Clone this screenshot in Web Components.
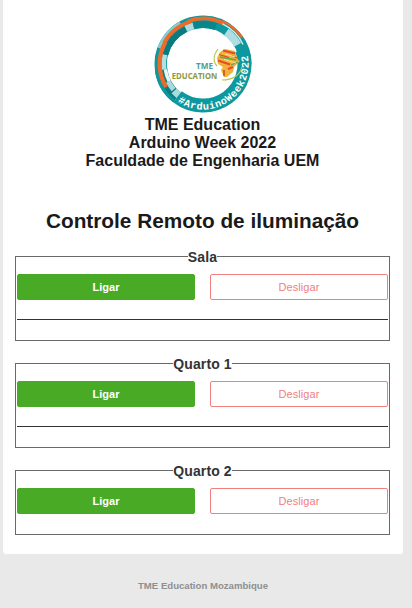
<!DOCTYPE html>
<html lang="pt">
<head>
<meta charset="utf-8">
<title>Controle Remoto</title>
<style>
html,body{margin:0;height:608px;overflow:hidden;background:#e9e9e9}
body{font-family:"Liberation Sans",Arial,sans-serif}
</style>
</head>
<body>
<remote-page>
  <week-logo slot="logo"></week-logo>
  <room-control name="Sala" divided></room-control>
  <room-control name="Quarto 1" divided></room-control>
  <room-control name="Quarto 2"></room-control>
</remote-page>
<script>
class WeekLogo extends HTMLElement{
  connectedCallback(){
    // Angles are in degrees, clockwise from the top of the ring.
    const pt=(r,a)=>{const t=a*Math.PI/180;return (49+r*Math.sin(t)).toFixed(2)+' '+(49-r*Math.cos(t)).toFixed(2)};
    const arc=(r,a,b,w,c)=>`<path d="M${pt(r,a)}A${r} ${r} 0 ${b-a>180?1:0} 1 ${pt(r,b)}" stroke="${c}" stroke-width="${w}"/>`;
    const ring=[
      arc(42.2,-100,90,12.4,'#10979d'),
      arc(41.5,70,218,14,'#0b989e'),
      arc(42.3,218,262,12.5,'#0b7e83'),
      arc(47,218,262,3,'#0b989e'),
      arc(39.5,218,227,7,'#a9dbdd'),
      arc(39,229,243,5,'#a9dbdd'),
      arc(38,243,262,3.5,'#e9f6f6'),
      arc(39.3,262,284,4.6,'#b2dfe0'),
      arc(38.8,284,334,6,'#077b80'),
      arc(39.3,334,346,7,'#aedbde'),
      arc(39.5,346,379,7,'#07868b'),
      arc(40.3,379,396,6.6,'#0b989e'),
      arc(39.7,396,421,7.5,'#b0dde1'),
      arc(46.5,290,331,4,'#86cdd0'),
      arc(43.4,238,300,4.2,'#ee6a2b'),
      arc(44.2,298,344,3.8,'#ee6a2b'),
      arc(45.4,340,388,3.6,'#ee6a2b'),
      arc(47,384,416,2.2,'#ee6a2b'),
      arc(44.6,386,424,1.2,'#d6eff0')
    ].join('');
    this.attachShadow({mode:'open'}).innerHTML=`
<style>:host{display:block;width:98px;height:98px}svg{display:block}</style>
<svg width="98" height="98" viewBox="0 0 98 98" fill="none">
<circle cx="49" cy="49" r="37" fill="#fff"/>${ring}
<path id="curve" d="M${pt(45.6,214)}A45.6 45.6 0 0 0 ${pt(45.6,74)}"/>
<text font-family="Liberation Mono,monospace" font-size="10.2" font-weight="700" fill="#fff" textLength="107" lengthAdjust="spacing"><textPath href="#curve">#ArduinoWeek2022</textPath></text>
<path d="M64 34C59 40 59 47 63 51M68 65C80 65 86 59 88 52" stroke="#b9c64c" stroke-width="1.1"/>
<path d="M66 37L71 34 81 36 84 45 86 46 80 52 79 57 73 62 70 62 67 55 69 52 64 49 63 43Z" fill="#efb23a"/>
<path d="M69 35.5L81 38.5M64 45.5L76 49.5M74 54L79 52" stroke="#e84c26" stroke-width="2.2"/>
<path d="M66 42L82 45M77 50L84 47" stroke="#61a654" stroke-width="1.3"/>
<path d="M65 39.5L75 42.5M78 41L83 43" stroke="#df4525" stroke-width="1.3"/>
<path d="M71 39L81 42M70 44.5L82 48" stroke="#ffe08a" stroke-width="1"/>
<path d="M70 55V61" stroke="#cf4429" stroke-width="1.5"/>
<g font-family="Open Sans,sans-serif" font-size="9" font-weight="700">
<text x="42" y="53.6" fill="#4b9f94" textLength="17" lengthAdjust="spacingAndGlyphs">TME</text>
<text x="17.8" y="63.6" fill="#8c963e" textLength="45.5" lengthAdjust="spacingAndGlyphs">EDUCATION</text></g>
</svg>`;
  }
}
customElements.define('week-logo',WeekLogo);

class ActionButton extends HTMLElement{
  connectedCallback(){
    this.attachShadow({mode:'open'}).innerHTML=`
<style>
:host{display:block}
button{display:block;box-sizing:border-box;width:100%;height:26px;margin:0;padding:0;border:1px solid #49aa26;border-radius:2px;background:#49aa26;color:#fff;font:bold 11px/24px "Liberation Sans",Arial,sans-serif}
:host([kind=off]) button{background:#fff;border-color:#f08080;color:#f08080;font-weight:400;letter-spacing:.1px}
</style><button><slot></slot></button>`;
  }
}
customElements.define('action-button',ActionButton);

class RoomControl extends HTMLElement{
  connectedCallback(){
    this.attachShadow({mode:'open'}).innerHTML=`
<style>
:host{display:block;margin-bottom:14px}
fieldset{box-sizing:border-box;width:375px;height:93px;margin:0;padding:10px 1px 0;border:1px solid #696969;min-width:0}
:host(:not([divided])) fieldset{height:73px}
legend{height:16px;margin:0 auto;padding:0;font-size:14px;line-height:18px;font-weight:700;color:#333;letter-spacing:.12px}
.row{display:grid;grid-template-columns:178px 178px;gap:15px}
hr{margin:19px 0 0;border:0;border-top:1px solid #333}
:host(:not([divided])) hr{display:none}
</style>
<fieldset><legend>${this.getAttribute('name')}</legend>
<div class="row"><action-button>Ligar</action-button><action-button kind="off">Desligar</action-button></div><hr></fieldset>`;
  }
}
customElements.define('room-control',RoomControl);

class RemotePage extends HTMLElement{
  connectedCallback(){
    this.attachShadow({mode:'open'}).innerHTML=`
<style>
:host{display:block}
main{box-sizing:border-box;width:400px;height:554px;margin-left:3px;padding:15px 13px 0 12px;background:#fff;border-radius:0 0 3px 3px;display:flex;flex-direction:column}
header{display:flex;flex-direction:column;align-items:center;text-align:center;color:#1a1a1a;font-weight:700;font-size:16px;line-height:18px}
header div{margin-top:3px}
h1{margin:39px 0 0;font-size:20.8px;line-height:24px;text-align:center;color:#1a1a1a}
section{margin-top:15px}
footer{width:400px;margin-left:3px;padding-top:26px;text-align:center;font-size:9.6px;line-height:12px;font-weight:700;color:#8f8f8f}
</style>
<main><header><slot name="logo"></slot><div>TME Education<br>Arduino Week 2022<br>Faculdade de Engenharia UEM</div></header>
<h1>Controle Remoto de iluminação</h1>
<section><slot></slot></section></main>
<footer>TME Education Mozambique</footer>`;
  }
}
customElements.define('remote-page',RemotePage);
</script>
</body>
</html>
